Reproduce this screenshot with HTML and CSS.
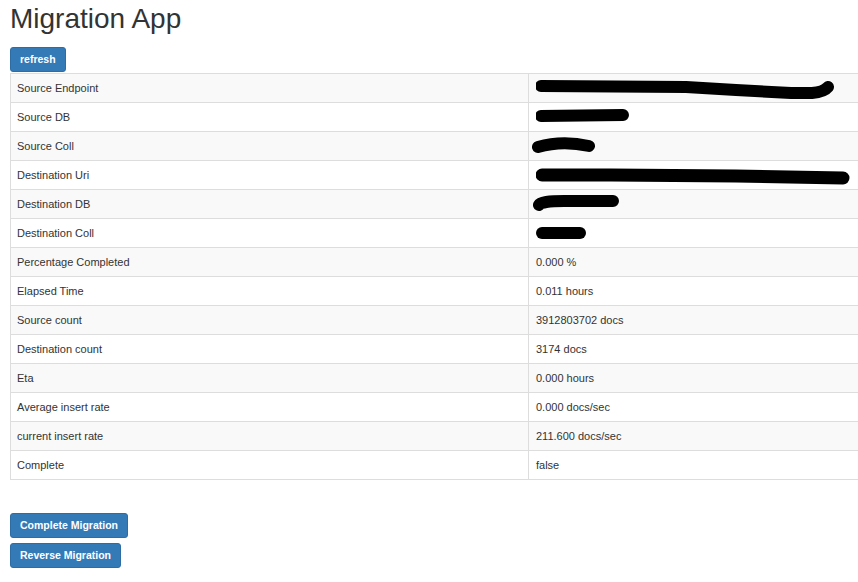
FILE: index.html
```html
<!DOCTYPE html>
<html>
<head>
<meta charset="utf-8">
<link rel="stylesheet" href="styles.css">
</head>
<body>
<h1 class="title">Migration App</h1>
<button class="btn">refresh</button>
<div class="table-wrap">
<table class="stats">
<colgroup><col class="c1"><col class="c2"></colgroup>
<tr><td>Source Endpoint</td><td class="red"><svg width="310" height="28"><path d="M5 12 L150 13 L200 16 L255 19 L276 19 Q288 18 292 13" fill="none" stroke="#000" stroke-width="12" stroke-linecap="round" stroke-linejoin="round"/></svg></td></tr>
<tr><td>Source DB</td><td class="red"><svg width="100" height="28"><path d="M5 13 L87 12" fill="none" stroke="#000" stroke-width="12" stroke-linecap="round"/></svg></td></tr>
<tr><td>Source Coll</td><td class="red"><svg class="shift" width="70" height="28"><path d="M6 15 Q30 8 57 14" fill="none" stroke="#000" stroke-width="12" stroke-linecap="round"/></svg></td></tr>
<tr><td>Destination Uri</td><td class="red"><svg width="320" height="28"><path d="M6 14 L75 14 L200 15 L307 17" fill="none" stroke="#000" stroke-width="13" stroke-linecap="round" stroke-linejoin="round"/></svg></td></tr>
<tr><td>Destination DB</td><td class="red"><svg class="shift" width="100" height="28"><path d="M7 15 Q9 11 32 11 L81 11" fill="none" stroke="#000" stroke-width="12" stroke-linecap="round" stroke-linejoin="round"/></svg></td></tr>
<tr><td>Destination Coll</td><td class="red"><svg width="60" height="28"><path d="M6 14 L44 14" fill="none" stroke="#000" stroke-width="12" stroke-linecap="round"/></svg></td></tr>
<tr><td>Percentage Completed</td><td>0.000 %</td></tr>
<tr><td>Elapsed Time</td><td>0.011 hours</td></tr>
<tr><td>Source count</td><td>3912803702 docs</td></tr>
<tr><td>Destination count</td><td>3174 docs</td></tr>
<tr><td>Eta</td><td>0.000 hours</td></tr>
<tr><td>Average insert rate</td><td>0.000 docs/sec</td></tr>
<tr><td>current insert rate</td><td>211.600 docs/sec</td></tr>
<tr><td>Complete</td><td>false</td></tr>
</table>
</div>
<div class="actions">
<button class="btn">Complete Migration</button>
<button class="btn">Reverse Migration</button>
</div>
</body>
</html>
```
FILE: styles.css
```css
html, body { margin: 0; padding: 0; background: #fff; }
body {
  padding: 0 0 0 10px;
  font-family: "Liberation Sans", Arial, sans-serif;
  color: #333;
  font-size: 11px;
}
.title {
  margin: 3px 0 12px;
  font-size: 28px;
  line-height: 32px;
  font-weight: normal;
  color: #333;
}
.btn {
  display: block;
  height: 25px;
  padding: 0 9px;
  margin: 0;
  background: #337ab7;
  border: 1px solid #2e6da4;
  border-radius: 3px;
  color: #fff;
  font-family: "Liberation Sans", Arial, sans-serif;
  font-size: 10.5px;
  font-weight: bold;
  line-height: 23px;
}
.table-wrap {
  overflow: hidden;
  margin-top: 1px;
}
.stats {
  width: 1036px;
  table-layout: fixed;
  border-collapse: collapse;
  border: 1px solid #ddd;
}
.c1 { width: 518px; }
.c2 { width: 518px; }
.stats td {
  border-top: 1px solid #ddd;
  height: 28px;
  padding: 0 7px 0 6px;
  line-height: 28px;
  vertical-align: middle;
  box-sizing: border-box;
}
.stats td + td { border-left: 1px solid #ddd; padding-left: 7px; }
.stats td.red { padding-left: 7px; }
.stats tr:nth-child(odd) td { background: #f9f9f9; }
.stats svg { display: block; }
.stats svg.shift { margin-left: -4px; }
.actions {
  margin-top: 33px;
  display: flex;
  flex-direction: column;
  align-items: flex-start;
  gap: 5px;
}
```
